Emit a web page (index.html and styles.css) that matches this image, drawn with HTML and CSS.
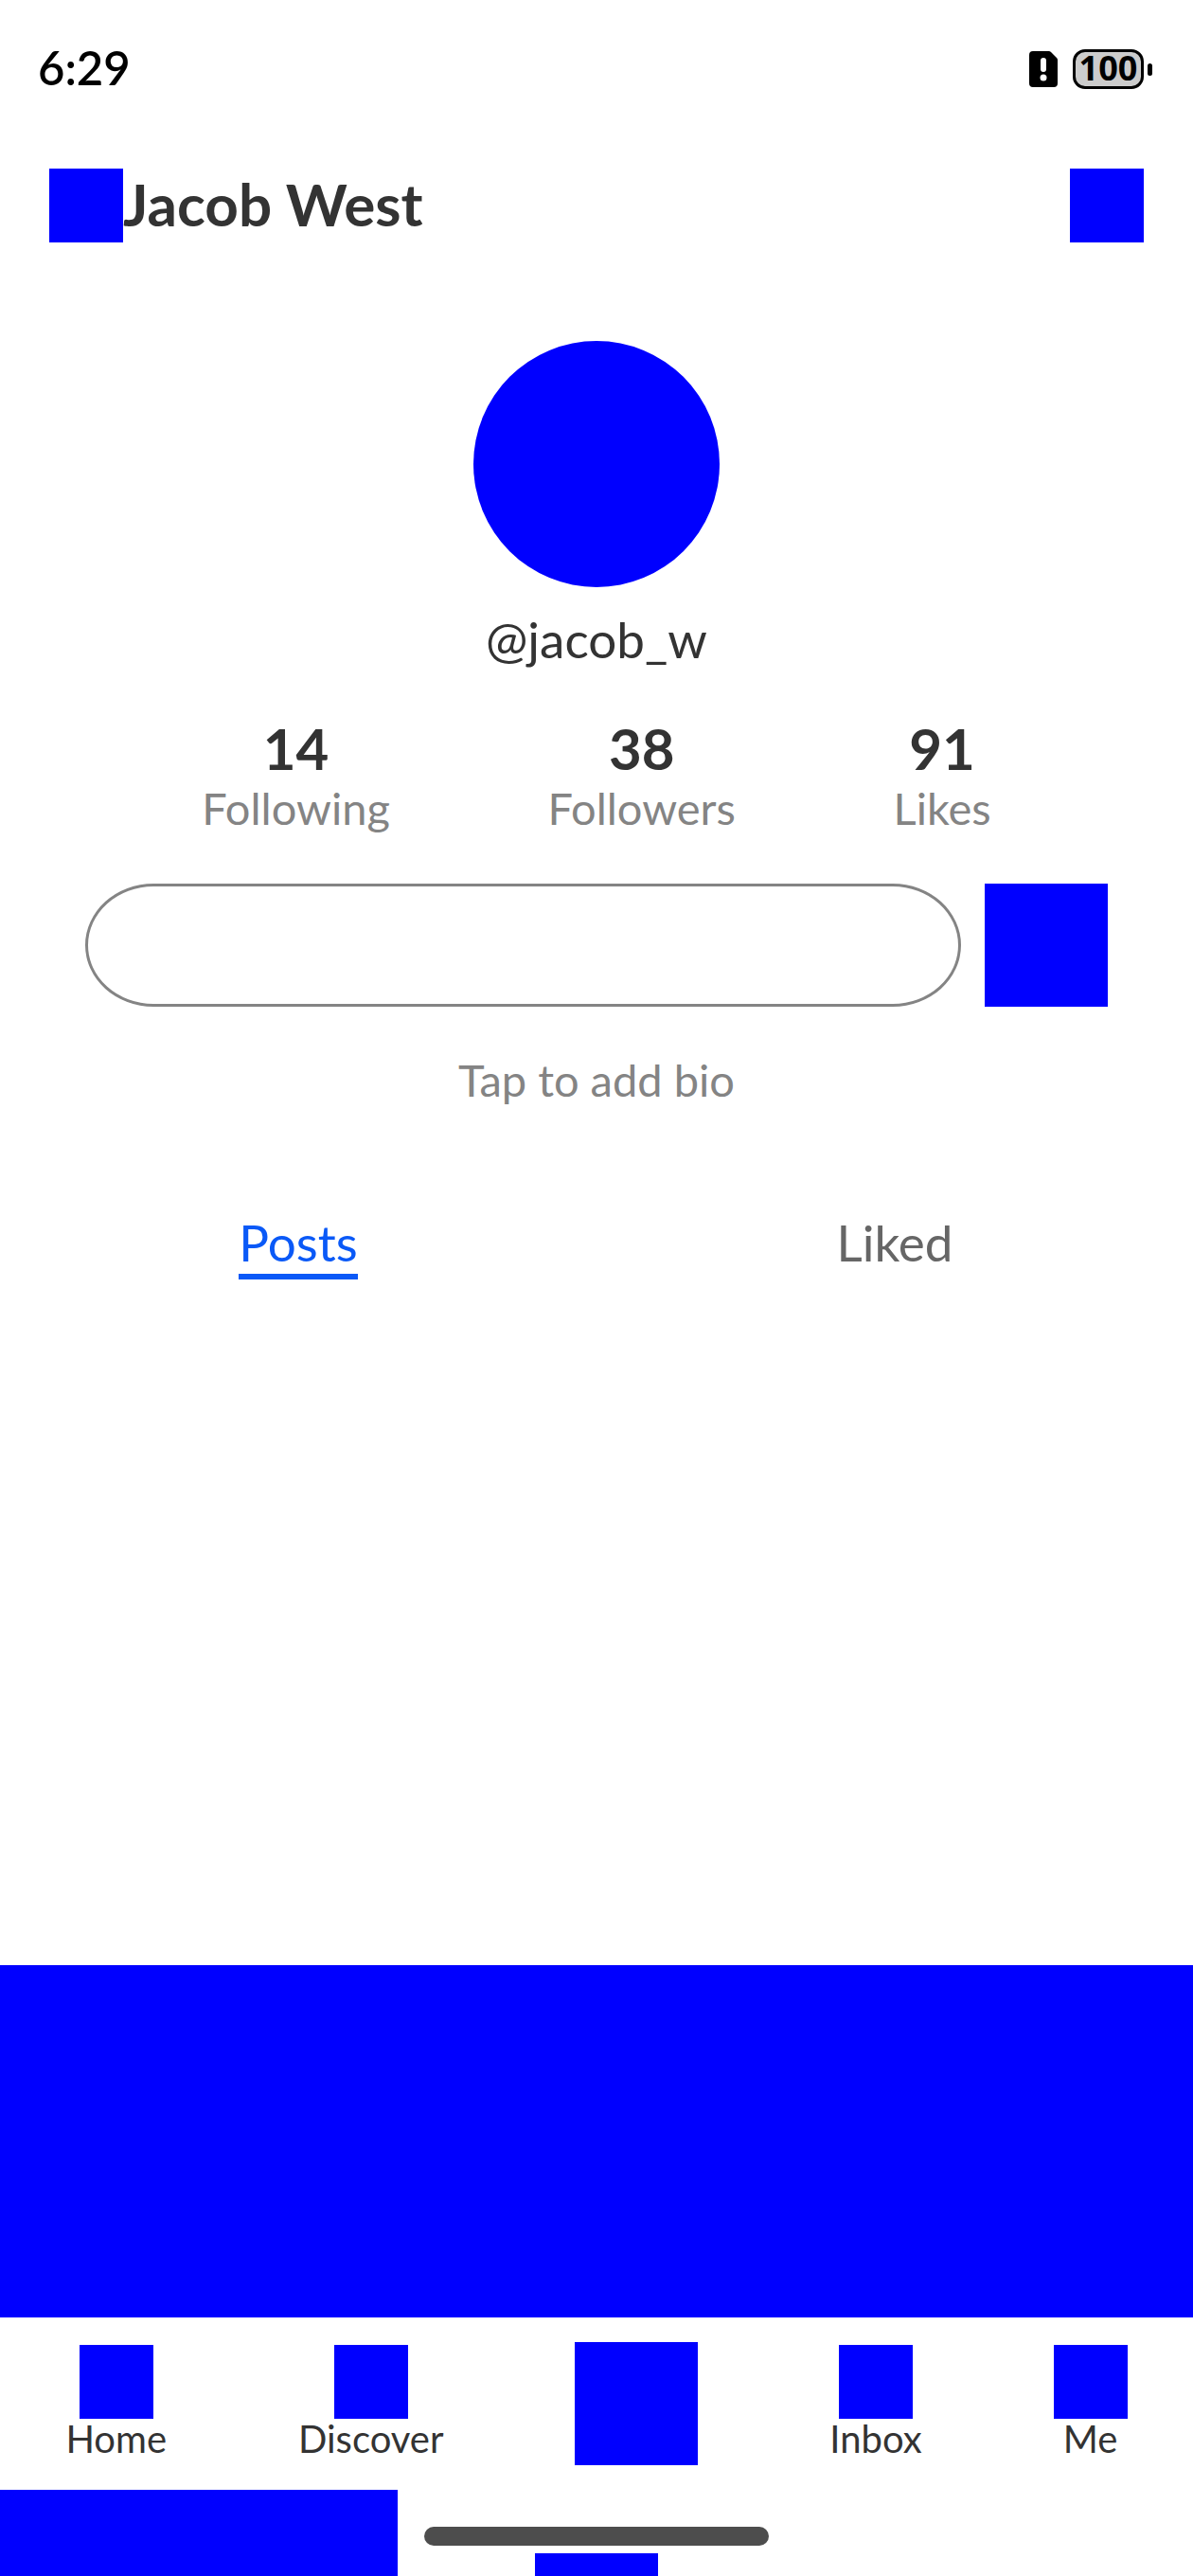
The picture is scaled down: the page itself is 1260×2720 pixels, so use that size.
FILE: index.html
```html
<!DOCTYPE html>
<html lang="en">
<head>
<meta charset="utf-8">
<meta name="viewport" content="width=device-width, initial-scale=1">
<title>Jacob West</title>
<link rel="stylesheet" href="styles.css">
</head>
<body>
<div class="status-bar">
  <time class="clock">6:29</time>
  <div class="status-icons">
    <svg class="sim" viewBox="0 0 30 38" aria-hidden="true">
      <path d="M4 0H20a4 4 0 0 1 3 1L29 7a4 4 0 0 1 1 3V34a4 4 0 0 1-4 4H4a4 4 0 0 1-4-4V4a4 4 0 0 1 4-4z"/>
      <rect class="sim-mark" x="12" y="7" width="6" height="15" rx="3"/>
      <circle class="sim-mark" cx="15" cy="28" r="3.5"/>
    </svg>
    <div class="battery"><span class="battery-level">100</span><span class="battery-tip"></span></div>
  </div>
</div>

<header class="header">
  <button class="tile tile-small" type="button" aria-label="Add friend"></button>
  <h1 class="name">Jacob West</h1>
  <button class="tile tile-small header-menu" type="button" aria-label="Menu"></button>
</header>

<main class="profile">
  <div class="avatar"></div>
  <p class="handle">@jacob_w</p>
  <ul class="stats">
    <li class="stat"><strong class="stat-value">14</strong><span class="stat-label">Following</span></li>
    <li class="stat"><strong class="stat-value">38</strong><span class="stat-label">Followers</span></li>
    <li class="stat"><strong class="stat-value">91</strong><span class="stat-label">Likes</span></li>
  </ul>
  <div class="actions">
    <button class="edit" type="button" aria-label="Edit profile"></button>
    <button class="tile tile-large" type="button" aria-label="Bookmarks"></button>
  </div>
  <button class="bio" type="button">Tap to add bio</button>
  <div class="tabs">
    <button class="tab tab-active" type="button">Posts</button>
    <button class="tab" type="button">Liked</button>
  </div>
</main>

<div class="banner"></div>

<nav class="nav">
  <a class="nav-item" href="#home"><span class="tile tile-small"></span>Home</a>
  <a class="nav-item" href="#discover"><span class="tile tile-small"></span>Discover</a>
  <a class="nav-item nav-create" href="#create" aria-label="Create"><span class="tile tile-large"></span></a>
  <a class="nav-item" href="#inbox"><span class="tile tile-small"></span>Inbox</a>
  <a class="nav-item" href="#me"><span class="tile tile-small"></span>Me</a>
</nav>

<footer class="bottom">
  <div class="bottom-panel"></div>
  <div class="bottom-cell"><span class="tile tile-large"></span></div>
  <div class="home-indicator"></div>
</footer>
</body>
</html>
```
FILE: styles.css
```css
* { box-sizing: border-box; }

body {
  margin: 0;
  min-height: 100vh;
  display: flex;
  flex-direction: column;
  background: #fff;
  color: #333;
  font-family: Lato, "Noto Sans", sans-serif;
}

button {
  margin: 0;
  padding: 0;
  border: 0;
  background: none;
  color: inherit;
  font: inherit;
}

h1, p, ul { margin: 0; padding: 0; }

.tile { display: block; flex: none; background: #00f; }
.tile-small { width: 78px; height: 78px; }
.tile-large { width: 130px; height: 130px; }

/* Status bar */
.status-bar {
  display: flex;
  align-items: center;
  justify-content: space-between;
  height: 146px;
  padding: 0 43px 0 40px;
  color: #000;
}
.clock { padding-bottom: 4px; font-size: 49px; line-height: 60px; font-weight: 600; }
.status-icons { display: flex; align-items: center; gap: 16px; }
.sim { display: block; width: 30px; height: 38px; }
.sim-mark { fill: #fff; }
.battery { display: flex; align-items: center; gap: 4px; }
.battery-level {
  width: 75px;
  height: 42px;
  border: 3px solid #000;
  border-radius: 13px;
  background: #ccc;
  font: bold 36px/34px "Noto Sans", sans-serif;
  text-align: center;
}
.battery-tip { width: 5px; height: 13px; border-radius: 3px; background: #000; }

/* Header */
.header {
  display: flex;
  align-items: center;
  height: 142px;
  padding: 0 52px;
}
.name { padding-bottom: 4px; font-size: 62px; line-height: 72px; font-weight: 700; }
.header-menu { margin-left: auto; }

/* Profile */
.profile {
  flex: 1 0 auto;
  display: flex;
  flex-direction: column;
  align-items: center;
  padding-top: 72px;
}
.avatar { width: 260px; height: 260px; border-radius: 50%; background: #00f; }
.handle { margin-top: 24px; font-size: 53px; line-height: 62px; }
.stats {
  display: flex;
  justify-content: space-around;
  align-self: stretch;
  margin-top: 51px;
  padding: 0 130px;
  list-style: none;
}
.stat { display: flex; flex-direction: column; align-items: center; }
.stat-value { font-size: 60px; line-height: 66px; }
.stat-label { padding-top: 2px; color: #848484; font-size: 47px; line-height: 56px; }
.actions {
  display: flex;
  gap: 25px;
  align-self: stretch;
  margin-top: 52px;
  padding: 0 90px;
}
.edit { flex: 1; border: 3px solid #848484; border-radius: 72px / 65px; }
.bio { margin-top: 49px; color: #848484; font-size: 47px; line-height: 56px; }
.tabs {
  display: grid;
  grid-template-columns: 1fr 1fr;
  justify-items: center;
  align-self: stretch;
  margin-top: 111px;
}
.tab { color: #666; border-bottom: 6px solid transparent; font-size: 53px; line-height: 66px; }
.tab-active { color: #0a59f7; border-color: #0a59f7; }

.banner { height: 372px; background: #00f; }

/* Bottom navigation */
.nav {
  display: flex;
  align-items: center;
  justify-content: space-around;
  height: 182px;
}
.nav-item {
  display: flex;
  flex-direction: column;
  align-items: center;
  padding-bottom: 4px;
  color: #333;
  font-size: 40px;
  line-height: 42px;
  text-decoration: none;
}
.nav-create { padding-bottom: 0; }

.bottom { position: relative; display: flex; height: 91px; overflow: hidden; }
.bottom-panel { width: 33.333%; background: #00f; }
.bottom-cell {
  width: 33.333%;
  display: flex;
  justify-content: center;
  padding-top: 67px;
}
.home-indicator {
  position: absolute;
  left: 50%;
  top: 39px;
  width: 364px;
  height: 20px;
  border-radius: 10px;
  background: #4d4d4d;
  transform: translateX(-50%);
}
```
